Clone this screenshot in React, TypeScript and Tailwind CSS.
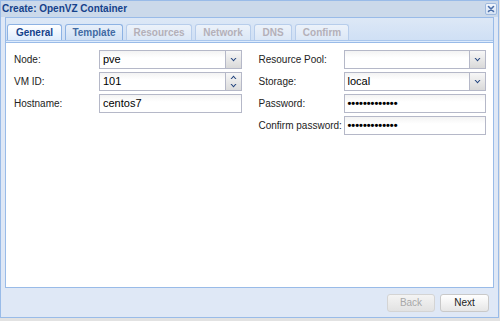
import React from 'react';

const tabs = [
  { label: 'General', w: 'w-[55px]', state: 'active' },
  { label: 'Template', w: 'w-[58px]', state: 'idle' },
  { label: 'Resources', w: 'w-[66px]', state: 'off' },
  { label: 'Network', w: 'w-[56px]', state: 'off' },
  { label: 'DNS', w: 'w-[38px]', state: 'off' },
  { label: 'Confirm', w: 'w-[54px]', state: 'off' },
];

function Chevron({ up = false }: { up?: boolean }) {
  return (
    <svg width="7" height="4" viewBox="0 0 7 4" className={up ? 'rotate-180' : ''}>
      <path d="M0.5 0 L3.5 3.6 L6.5 0 L5.2 0 L3.5 2 L1.8 0 Z" fill="#24467f" />
    </svg>
  );
}

function Field({ value, trigger, spinner, password }: { value?: string; trigger?: boolean; spinner?: boolean; password?: boolean }) {
  return (
    <div className="flex-1 h-[19px] flex border border-[#b5b8c8] bg-gradient-to-b from-[#f3f3f3] to-white to-40%">
      <div
        className={`flex-1 flex items-center pl-[3px] text-black ${password ? 'text-[11px] font-bold' : 'text-[11px]'}`}
      >
        {value}
      </div>
      {trigger && (
        <div className="w-[16px] border-l border-[#b5b8c8] bg-gradient-to-b from-[#f7f7f7] to-[#d9d9d9] flex items-center justify-center">
          <Chevron />
        </div>
      )}
      {spinner && (
        <div className="w-[16px] border-l border-[#b5b8c8] bg-gradient-to-b from-[#f7f7f7] to-[#dcdcdc] flex flex-col">
          <div className="flex-1 flex items-center justify-center">
            <Chevron up />
          </div>
          <div className="flex-1 flex items-center justify-center">
            <Chevron />
          </div>
        </div>
      )}
    </div>
  );
}

function Row({ label, children }: { label: string; children: React.ReactNode }) {
  return (
    <div className="flex items-center h-[19px]">
      <label className="w-[85px] shrink-0 text-[10px] text-[#222]">{label}</label>
      {children}
    </div>
  );
}

export default function App() {
  const dots = '\u2022'.repeat(13);

  return (
    <div className="w-[500px] h-[321px] bg-[#e2e2e2] font-['Liberation_Sans',Arial,sans-serif]">
      <div className="w-[499px] h-[318px] border border-[#99bbe8] bg-[#dfe8f6] flex flex-col">
        {/* Header */}
        <div className="h-[16px] shrink-0 bg-[#cbd9ea] flex items-center justify-between pl-[1px] pr-[1px]">
          <span className="text-[10px] font-bold text-[#15428b] leading-none">Create: OpenVZ Container</span>
          <svg width="12" height="12" viewBox="0 0 12 12">
            <defs>
              <linearGradient id="cl" x1="0" y1="0" x2="0" y2="1">
                <stop offset="0" stopColor="#f4f8fd" />
                <stop offset="1" stopColor="#d3e1f3" />
              </linearGradient>
            </defs>
            <rect x="0.5" y="0.5" width="11" height="11" rx="1.5" fill="url(#cl)" stroke="#9fb9dd" />
            <path d="M3.5 3.5 L8.5 8.5 M8.5 3.5 L3.5 8.5" stroke="#4a6ea8" strokeWidth="1.6" strokeLinecap="round" />
          </svg>
        </div>

        {/* Tab panel */}
        <div className="mx-[4px] flex-1 flex flex-col border border-[#99bbe8]">
          <div className="shrink-0 bg-gradient-to-b from-[#dde8f6] to-[#cedff5] border-b border-[#99bbe8]">
            <div className="h-[22px] flex items-end gap-[3px] pl-[1px]">
              {tabs.map(t => (
                <div
                  key={t.label}
                  className={`${t.w} h-[16px] flex items-center justify-center rounded-t-[3px] border border-b-0 text-[10px] font-bold ${
                    t.state === 'active'
                      ? 'border-[#8db2e3] bg-gradient-to-b from-white to-[#deecfd] text-[#15428b]'
                      : t.state === 'idle'
                        ? 'border-[#8db2e3] bg-gradient-to-b from-[#e8f0fa] to-[#d0e0f4] text-[#416aa3]'
                        : 'border-[#b7cdeb] bg-gradient-to-b from-[#ecf2fa] to-[#dbe7f6] text-[#b4b0b8]'
                  }`}
                >
                  {t.label}
                </div>
              ))}
            </div>
            <div className="h-[2px] bg-[#deecfd] border-t border-[#a9c6ec]" />
          </div>

          <div className="flex-1 bg-white pt-[7px] pl-[8px] pr-[7px]">
            <div className="grid grid-cols-2 gap-x-[17px]">
              <div className="flex flex-col gap-[3px]">
                <Row label="Node:">
                  <Field value="pve" trigger />
                </Row>
                <Row label="VM ID:">
                  <Field value="101" spinner />
                </Row>
                <Row label="Hostname:">
                  <Field value="centos7" />
                </Row>
              </div>
              <div className="flex flex-col gap-[3px]">
                <Row label="Resource Pool:">
                  <Field trigger />
                </Row>
                <Row label="Storage:">
                  <Field value="local" trigger />
                </Row>
                <Row label="Password:">
                  <Field value={dots} password />
                </Row>
                <Row label="Confirm password:">
                  <Field value={dots} password />
                </Row>
              </div>
            </div>
          </div>
        </div>

        {/* Footer */}
        <div className="h-[29px] shrink-0 flex items-center justify-end gap-[5px] pr-[9px]">
          <button className="w-[48px] h-[18px] rounded-[3px] border border-[#d4d4d4] bg-gradient-to-b from-[#f4f4f4] to-[#e2e2e2] text-[10px] text-[#a8a8a8]">
            Back
          </button>
          <button className="w-[49px] h-[18px] rounded-[3px] border border-[#c9c9c9] bg-gradient-to-b from-white to-[#e6e6e6] text-[10px] text-[#222]">
            Next
          </button>
        </div>
      </div>
    </div>
  );
}
